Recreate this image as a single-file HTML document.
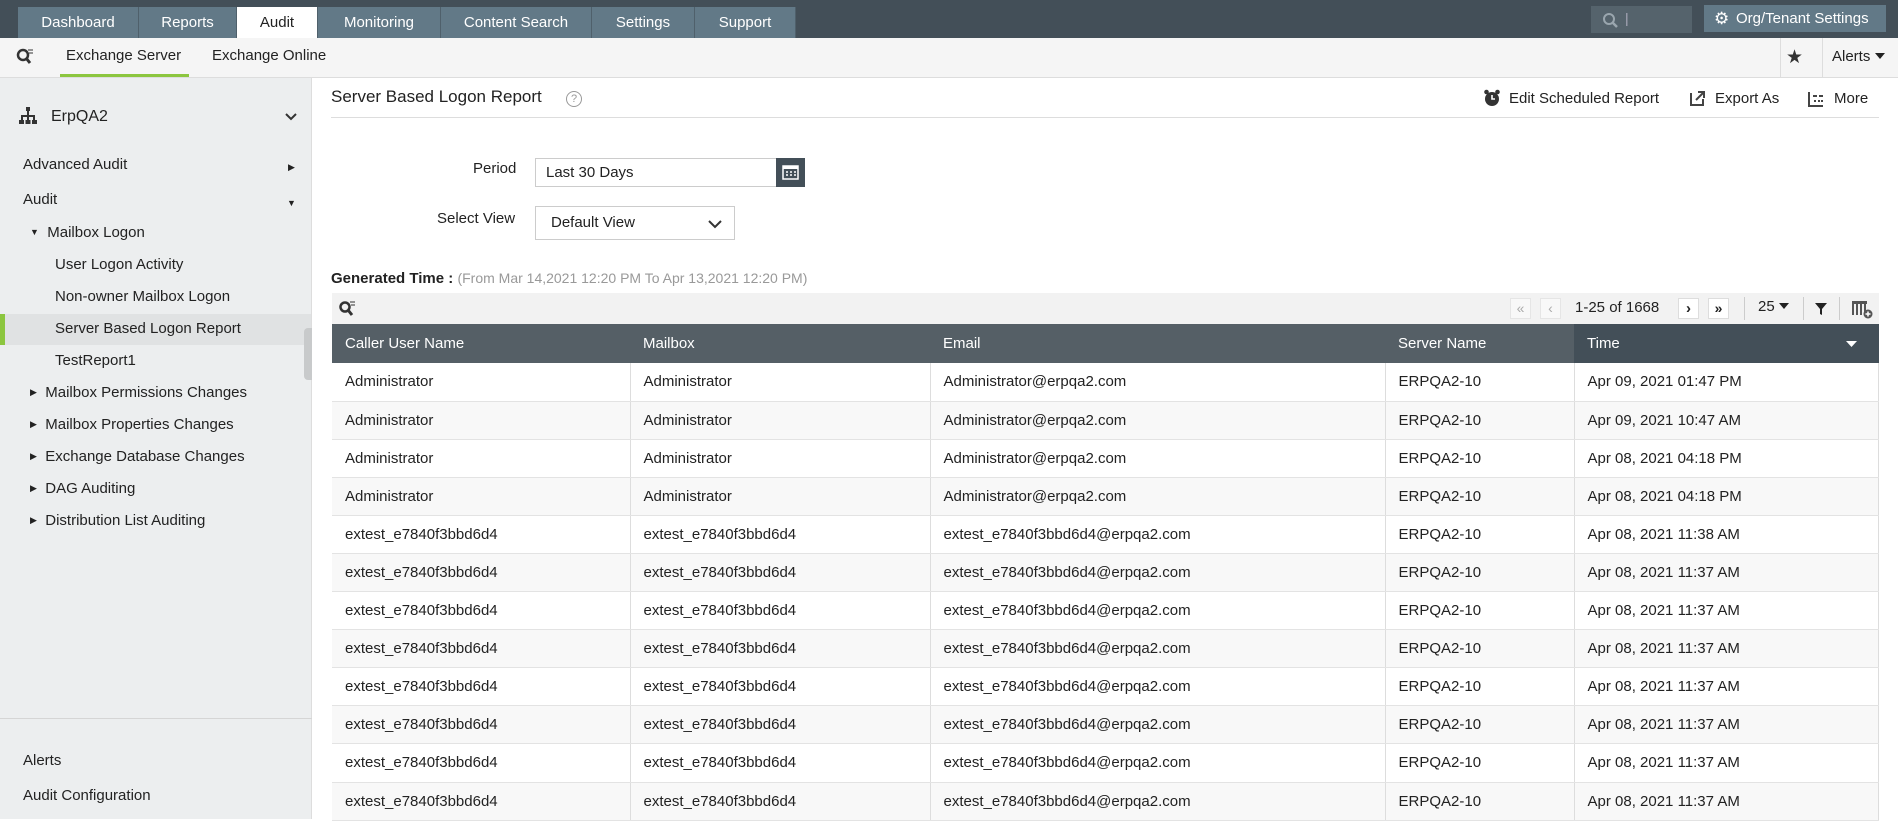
<!DOCTYPE html>
<html><head><meta charset="utf-8"><style>
*{margin:0;padding:0;box-sizing:border-box}
body{width:1898px;height:819px;overflow:hidden;font-family:"Liberation Sans",Arial,sans-serif;font-size:15px;color:#222;background:#fff;position:relative}
.a{position:absolute;white-space:nowrap}
#top{left:0;top:0;width:1898px;height:38px;background:#434f58}
.tab{position:absolute;top:7px;height:31px;background:#627987;color:#fff;font-size:15px;line-height:31px;text-align:center;border-right:1px solid #4f606b}
#sub{left:0;top:38px;width:1898px;height:40px;background:#f5f5f5;border-bottom:1px solid #ddd}
#side{left:0;top:78px;width:312px;height:741px;background:#eceeef;border-right:1px solid #ddd}
.si{position:absolute;left:0;font-size:15px;line-height:20px;color:#222}
th,td{text-align:left;font-weight:normal}
table{border-collapse:collapse;position:absolute;left:332px;top:324px;width:1547px;font-size:15px}
th{background:#555f66;color:#fff;height:39px;padding-left:13px}
td{height:38.1px;padding-left:13px;border-right:1px solid #ddd;border-bottom:1px solid #e3e3e3}
tr:nth-child(odd) td{background:#f8f8f8}
</style></head><body>
<div class="a" id="top"></div>
<div class="tab" style="left:18px;width:121px">Dashboard</div>
<div class="tab" style="left:139px;width:98px">Reports</div>
<div class="tab" style="left:237px;width:81px;background:#fff;color:#222">Audit</div>
<div class="tab" style="left:318px;width:123px">Monitoring</div>
<div class="tab" style="left:441px;width:151px">Content Search</div>
<div class="tab" style="left:592px;width:103px">Settings</div>
<div class="tab" style="left:695px;width:101px">Support</div>
<div class="a" style="left:1591px;top:6px;width:101px;height:27px;background:#55636c"><svg width="20" height="20" style="position:absolute;left:10px;top:5px"><circle cx="8" cy="8" r="5" fill="none" stroke="#9aa6ae" stroke-width="2"/><line x1="12" y1="12" x2="16" y2="16" stroke="#9aa6ae" stroke-width="2.5"/></svg><span style="position:absolute;left:34px;top:4px;color:#aab;font-size:14px">|</span></div>
<div class="a" style="left:1704px;top:5px;width:182px;height:27px;background:#627987;color:#fff;font-size:15px;line-height:27px;padding-left:32px">Org/Tenant Settings<span style="position:absolute;left:10px;top:0;font-size:17px">⚙</span></div>
<div class="a" id="sub"></div>
<svg class="a" style="left:15px;top:47px" width="20" height="20"><circle cx="8" cy="8" r="5" fill="none" stroke="#333" stroke-width="2.5"/><line x1="11" y1="11" x2="15" y2="16" stroke="#333" stroke-width="3"/><line x1="13" y1="3" x2="18" y2="3" stroke="#333"/><line x1="14" y1="6" x2="18" y2="6" stroke="#333"/></svg>
<div class="a" style="left:66px;top:47px;font-size:15px">Exchange Server</div>
<div class="a" style="left:60px;top:74px;width:129px;height:3px;background:#8cc63f"></div>
<div class="a" style="left:212px;top:47px;font-size:15px">Exchange Online</div>
<div class="a" style="left:1780px;top:38px;width:1px;height:39px;background:#ddd"></div>
<div class="a" style="left:1786px;top:46px;font-size:19px;color:#333">★</div>
<div class="a" style="left:1822px;top:38px;width:1px;height:39px;background:#ddd"></div>
<div class="a" style="left:1832px;top:48px;font-size:15px">Alerts <svg width="10" height="6" style="vertical-align:2px"><path d="M0 0H10L5 6Z" fill="#222"/></svg></div>
<div class="a" id="side"></div>
<svg class="a" style="left:19px;top:107px" width="18" height="18"><rect x="7" y="0" width="4" height="4" fill="#333"/><rect x="8" y="4" width="2" height="5" fill="#333"/><rect x="2" y="8" width="14" height="2" fill="#333"/><rect x="2" y="8" width="2" height="5" fill="#333"/><rect x="8" y="8" width="2" height="5" fill="#333"/><rect x="14" y="8" width="2" height="5" fill="#333"/><rect x="0" y="13" width="5" height="4" fill="#333"/><rect x="6.5" y="13" width="5" height="4" fill="#333"/><rect x="13" y="13" width="5" height="4" fill="#333"/></svg>
<div class="si" style="left:51px;top:107px;font-size:16px">ErpQA2</div>
<svg class="a" style="left:285px;top:113px" width="12" height="8"><path d="M1 1L6 6L11 1" fill="none" stroke="#333" stroke-width="2"/></svg>
<div class="si" style="left:23px;top:155px">Advanced Audit</div><div class="si" style="left:288px;top:157px;font-size:9px">▶</div>
<div class="si" style="left:23px;top:190px">Audit</div><div class="si" style="left:287px;top:193px;font-size:9px">▼</div>
<div class="si" style="left:30px;top:222px"><span style="font-size:9px;vertical-align:2px">▼</span>&nbsp; Mailbox Logon</div>
<div class="si" style="left:55px;top:255px">User Logon Activity</div>
<div class="si" style="left:55px;top:287px">Non-owner Mailbox Logon</div>
<div class="a" style="left:0;top:314px;width:311px;height:31px;background:#e0e2e3"></div>
<div class="a" style="left:0;top:314px;width:5px;height:31px;background:#8cc63f"></div>
<div class="si" style="left:55px;top:319px">Server Based Logon Report</div>
<div class="si" style="left:55px;top:351px">TestReport1</div>
<div class="a" style="left:304px;top:328px;width:8px;height:52px;background:#c8cacb;border-radius:4px 0 0 4px"></div>
<div class="si" style="left:30px;top:382px"><span style="font-size:9px;vertical-align:2px">▶</span>&nbsp; Mailbox Permissions Changes</div>
<div class="si" style="left:30px;top:414px"><span style="font-size:9px;vertical-align:2px">▶</span>&nbsp; Mailbox Properties Changes</div>
<div class="si" style="left:30px;top:446px"><span style="font-size:9px;vertical-align:2px">▶</span>&nbsp; Exchange Database Changes</div>
<div class="si" style="left:30px;top:478px"><span style="font-size:9px;vertical-align:2px">▶</span>&nbsp; DAG Auditing</div>
<div class="si" style="left:30px;top:510px"><span style="font-size:9px;vertical-align:2px">▶</span>&nbsp; Distribution List Auditing</div>
<div class="a" style="left:0;top:718px;width:312px;height:1px;background:#d5d5d5"></div>
<div class="si" style="left:23px;top:751px">Alerts</div>
<div class="si" style="left:23px;top:786px">Audit Configuration</div>

<div class="a" style="left:331px;top:87px;font-size:17px">Server Based Logon Report</div>
<div class="a" style="left:566px;top:91px;width:16px;height:16px;border:1px solid #999;border-radius:50%;font-size:11px;color:#999;text-align:center;line-height:14px">?</div>
<div class="a" style="left:331px;top:117px;width:1548px;height:1px;background:#ddd"></div>
<svg class="a" style="left:1484px;top:89px" width="16" height="18"><circle cx="8" cy="10" r="7" fill="#333"/><circle cx="2.5" cy="3" r="2.3" fill="#333"/><circle cx="13.5" cy="3" r="2.3" fill="#333"/><path d="M8 6V10H11" fill="none" stroke="#fff" stroke-width="1.6"/></svg>
<div class="a" style="left:1509px;top:90px">Edit Scheduled Report</div>
<svg class="a" style="left:1690px;top:90px" width="16" height="16"><path d="M1 3V15H13V9" fill="none" stroke="#444" stroke-width="2"/><path d="M6 10L13 3M8 2H14V8" fill="none" stroke="#444" stroke-width="2"/></svg>
<div class="a" style="left:1715px;top:90px">Export As</div>
<svg class="a" style="left:1808px;top:91px" width="16" height="16"><path d="M1 1V15H15" fill="none" stroke="#444" stroke-width="2"/><path d="M5 5H9M11 5H15M6 10H8M10 10H12M13 10H15" stroke="#444" stroke-width="2"/></svg>
<div class="a" style="left:1834px;top:90px">More</div>

<div class="a" style="left:473px;top:160px">Period</div>
<div class="a" style="left:535px;top:158px;width:242px;height:29px;border:1px solid #ccc;padding-left:10px;line-height:27px">Last 30 Days</div>
<div class="a" style="left:776px;top:158px;width:29px;height:29px;background:#434f58"><svg width="29" height="29"><rect x="7" y="8" width="15" height="13" fill="none" stroke="#fff" stroke-width="1.5"/><rect x="7" y="8" width="15" height="3" fill="#fff"/><path d="M10 14h2M14 14h2M18 14h2M10 17h2M14 17h2M18 17h2" stroke="#fff" stroke-width="1.5"/></svg></div>
<div class="a" style="left:437px;top:210px">Select View</div>
<div class="a" style="left:535px;top:206px;width:200px;height:34px;border:1px solid #ccc;padding-left:15px;line-height:32px">Default View<svg style="position:absolute;right:12px;top:12px" width="14" height="10"><path d="M1 2L7 8L13 2" fill="none" stroke="#333" stroke-width="2"/></svg></div>

<div class="a" style="left:331px;top:270px;font-size:15px"><b>Generated Time :</b> <span style="color:#999;font-size:14px">(From Mar 14,2021 12:20 PM To Apr 13,2021 12:20 PM)</span></div>
<div class="a" style="left:332px;top:293px;width:1547px;height:31px;background:#f2f2f2"></div>
<svg class="a" style="left:338px;top:300px" width="18" height="18"><circle cx="7" cy="7" r="4.5" fill="none" stroke="#333" stroke-width="2.5"/><line x1="10" y1="10" x2="14" y2="15" stroke="#333" stroke-width="3"/><line x1="12" y1="2" x2="17" y2="2" stroke="#333"/><line x1="13" y1="5" x2="17" y2="5" stroke="#333"/></svg>
<div class="a" style="left:1510px;top:298px;width:21px;height:21px;background:#f8f8f8;border:1px solid #e5e5e5;color:#aaa;font-size:14px;text-align:center;line-height:19px">«</div>
<div class="a" style="left:1540px;top:298px;width:21px;height:21px;background:#f8f8f8;border:1px solid #e5e5e5;color:#aaa;font-size:14px;text-align:center;line-height:19px">‹</div>
<div class="a" style="left:1575px;top:299px;font-size:15px">1-25 of 1668</div>
<div class="a" style="left:1678px;top:298px;width:21px;height:21px;background:#fff;border:1px solid #ddd;font-size:15px;font-weight:bold;text-align:center;line-height:19px">›</div>
<div class="a" style="left:1708px;top:298px;width:21px;height:21px;background:#fff;border:1px solid #ddd;font-size:14px;font-weight:bold;text-align:center;line-height:19px">»</div>
<div class="a" style="left:1744px;top:297px;width:1px;height:23px;background:#ccc"></div>
<div class="a" style="left:1758px;top:298px">25 <svg width="10" height="6" style="vertical-align:2px"><path d="M0 0H10L5 6Z" fill="#222"/></svg></div>
<div class="a" style="left:1803px;top:297px;width:1px;height:23px;background:#ccc"></div>
<svg class="a" style="left:1814px;top:302px" width="14" height="14"><path d="M1 1H13L8 7V13L6 12V7Z" fill="#222"/></svg>
<div class="a" style="left:1839px;top:297px;width:1px;height:23px;background:#ccc"></div>
<svg class="a" style="left:1852px;top:300px" width="22" height="20"><rect x="0" y="1" width="15" height="3" fill="#555"/><path d="M1 4v11M5 4v11M9 4v11M13 4v8" stroke="#555" stroke-width="2"/><circle cx="16" cy="14" r="4.5" fill="#555"/><path d="M16 11.5v5M13.5 14h5" stroke="#fff" stroke-width="1.5"/></svg>
<table>
<tr><th style="width:298px">Caller User Name</th><th style="width:300px">Mailbox</th><th style="width:455px">Email</th><th style="width:189px">Server Name</th><th style="background:#434f58">Time<svg width="11" height="6" style="float:right;margin-right:22px;margin-top:6px"><path d="M0 0H11L5.5 6Z" fill="#fff"/></svg></th></tr>
<tr><td>Administrator</td><td>Administrator</td><td>Administrator@erpqa2.com</td><td>ERPQA2-10</td><td>Apr 09, 2021 01:47 PM</td></tr>
<tr><td>Administrator</td><td>Administrator</td><td>Administrator@erpqa2.com</td><td>ERPQA2-10</td><td>Apr 09, 2021 10:47 AM</td></tr>
<tr><td>Administrator</td><td>Administrator</td><td>Administrator@erpqa2.com</td><td>ERPQA2-10</td><td>Apr 08, 2021 04:18 PM</td></tr>
<tr><td>Administrator</td><td>Administrator</td><td>Administrator@erpqa2.com</td><td>ERPQA2-10</td><td>Apr 08, 2021 04:18 PM</td></tr>
<tr><td>extest_e7840f3bbd6d4</td><td>extest_e7840f3bbd6d4</td><td>extest_e7840f3bbd6d4@erpqa2.com</td><td>ERPQA2-10</td><td>Apr 08, 2021 11:38 AM</td></tr>
<tr><td>extest_e7840f3bbd6d4</td><td>extest_e7840f3bbd6d4</td><td>extest_e7840f3bbd6d4@erpqa2.com</td><td>ERPQA2-10</td><td>Apr 08, 2021 11:37 AM</td></tr>
<tr><td>extest_e7840f3bbd6d4</td><td>extest_e7840f3bbd6d4</td><td>extest_e7840f3bbd6d4@erpqa2.com</td><td>ERPQA2-10</td><td>Apr 08, 2021 11:37 AM</td></tr>
<tr><td>extest_e7840f3bbd6d4</td><td>extest_e7840f3bbd6d4</td><td>extest_e7840f3bbd6d4@erpqa2.com</td><td>ERPQA2-10</td><td>Apr 08, 2021 11:37 AM</td></tr>
<tr><td>extest_e7840f3bbd6d4</td><td>extest_e7840f3bbd6d4</td><td>extest_e7840f3bbd6d4@erpqa2.com</td><td>ERPQA2-10</td><td>Apr 08, 2021 11:37 AM</td></tr>
<tr><td>extest_e7840f3bbd6d4</td><td>extest_e7840f3bbd6d4</td><td>extest_e7840f3bbd6d4@erpqa2.com</td><td>ERPQA2-10</td><td>Apr 08, 2021 11:37 AM</td></tr>
<tr><td>extest_e7840f3bbd6d4</td><td>extest_e7840f3bbd6d4</td><td>extest_e7840f3bbd6d4@erpqa2.com</td><td>ERPQA2-10</td><td>Apr 08, 2021 11:37 AM</td></tr>
<tr><td>extest_e7840f3bbd6d4</td><td>extest_e7840f3bbd6d4</td><td>extest_e7840f3bbd6d4@erpqa2.com</td><td>ERPQA2-10</td><td>Apr 08, 2021 11:37 AM</td></tr>
</table>
</body></html>
